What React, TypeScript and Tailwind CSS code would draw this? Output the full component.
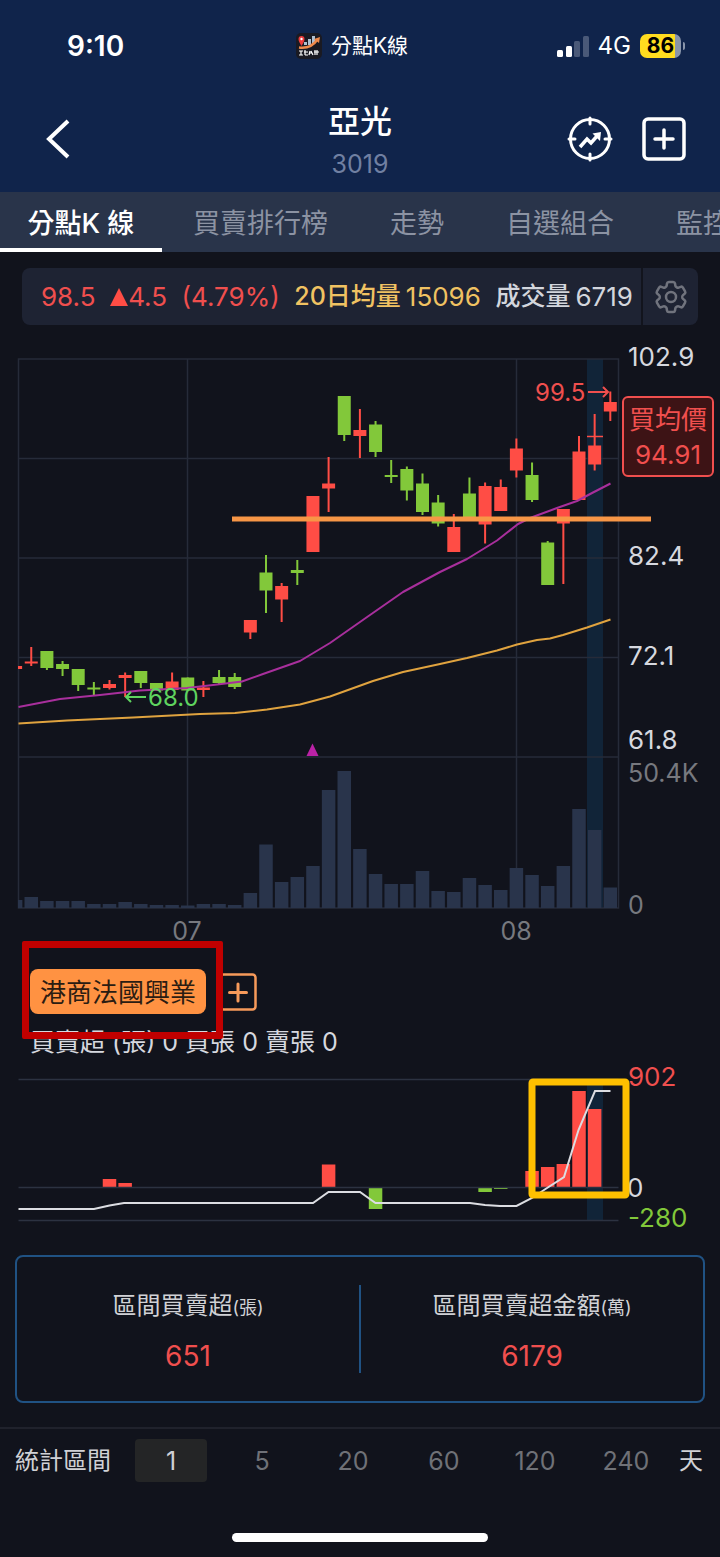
import { useState } from 'react'
import { clsx } from 'clsx'
import { HiOutlineCog6Tooth } from 'react-icons/hi2'

const tabs = ['分點K 線', '買賣排行榜', '走勢', '自選組合', '監控']
const ranges = [1, 5, 20, 60, 120, 240]

const UP = '#ff4d45'
const DOWN = '#82c83a'

// one slot per trading day, in chart units
const STEP = 15.65
const dayX = (day: number) => 15.6 + day * STEP

// [up, high, top of body, bottom of body, low]
const candles: [boolean, number, number, number, number][] = [
	[true, 666, 666, 669, 669],
	[true, 647, 661.5, 663.5, 666],
	[false, 651, 651, 668, 670],
	[false, 661, 664, 669, 676],
	[false, 669, 669, 685, 691],
	[false, 682, 687.5, 689.5, 695.5],
	[true, 680, 684, 688, 689.5],
	[true, 672.5, 675, 678, 697],
	[false, 671, 671, 683, 688],
	[false, 683, 683, 690.5, 690.5],
	[true, 672.5, 681.5, 690, 690],
	[false, 677.5, 677.5, 690.5, 690.5],
	[true, 681, 687.5, 690, 697],
	[false, 670, 677, 683, 684],
	[false, 673, 677, 687, 689],
	[true, 620, 620, 632.5, 639],
	[false, 555, 572.5, 590.5, 613],
	[true, 583, 586, 599.5, 622],
	[false, 560, 570, 573, 585],
	[true, 496, 496, 552, 552],
	[true, 457, 483.5, 488.5, 512],
	[false, 396, 396, 435, 441],
	[true, 409, 430, 436, 458],
	[false, 421, 424.5, 452, 457],
	[false, 460, 475, 477, 483],
	[false, 466.5, 469, 490.5, 500.5],
	[false, 473.5, 483.5, 512, 515],
	[false, 495, 502.5, 523.5, 526.5],
	[true, 514, 527, 552, 552],
	[false, 477.5, 493.5, 520.5, 520.5],
	[true, 482.5, 486, 524.5, 543.5],
	[true, 479.5, 487, 511, 511],
	[true, 438.5, 448.5, 470.5, 477.5],
	[false, 462.5, 475, 500, 502],
	[false, 541, 542.5, 585, 585],
	[true, 509, 509, 523.5, 584],
	[true, 436, 451.5, 500, 500],
	[true, 414, 445.5, 464.5, 470.5],
	[true, 391.5, 402, 411.5, 421],
]

const volumes = [
	8, 11, 7, 7, 7, 4, 4, 6, 4, 3, 3, 2.5, 4, 4, 3, 15, 63.5, 26, 31, 42, 118,
	137, 59, 34, 24, 24, 37, 17, 16, 30, 23, 18, 40, 33, 22, 42, 99, 78, 20.5,
]

// [day, net lots in chart units]
const netLots = [
	[6, 8],
	[7, 4],
	[20, 22.5],
	[23, -21],
	[30, -4],
	[31, -1],
	[33, 16],
	[34, 20],
	[35, 23],
	[36, 96],
	[37, 78],
]

const fastAverage =
	'18.5,707 60,699 100,695 140,690.5 187,688 213,685 242,681.5 263,674 300,661 330,643 370,615 403,592 440,572 467,559 497,540.5 518,524 530,518 557,508 577,501 593,492.5 610.5,483.5'
const slowAverage =
	'18.5,723.5 67,720.5 133,717.5 200,714 235,713 267,709.5 300,704.5 330,696.5 373,681 403,672 440,664 467,658 497,650.5 517,644.5 537,640 550,638.5 563,635 587,627.5 610.5,619.5'
const balance =
	'18.5,1209 94,1209 109.5,1205.5 124,1203 313,1203 328.5,1192 360,1192 375.5,1203 470,1203 485,1205 500,1206 516.5,1206 532,1198 547,1188 564,1177 578.5,1130 595,1091 610.5,1091'

function AppBadge() {
	return (
		<svg viewBox="0 0 26 26" className="size-[26px]" aria-hidden="true">
			<rect width="26" height="26" rx="5" fill="#1a1a22" />
			<path d="M8 12V9h3v3zM12 12V6h3v6zM16 11V3h3v8z" fill="#aebfd0" />
			<path
				d="M3 14.5c8 1 14-1.500 18-7.500"
				fill="none"
				stroke="#f08a4b"
				strokeWidth="2.500"
			/>
			<path d="m18 6 6-2-1 6z" fill="#f08a4b" />
			<path
				d="M5.500 13C3.500 9.500 2.500 8 2.500 6a3 3 0 0 1 6 0c0 2-1 3.500-3 7z"
				fill="#ee3b3b"
			/>
			<circle cx="5.500" cy="6" r="1.200" fill="#fff" />
			<path
				d="M3 18h4M5 18v4M3 22h4M9 17v5M8 19h4M9 22h3M14 18l-1 4M15 18l2 4M14 20h2M19 17v5M18 19h5M21 17v5"
				fill="none"
				stroke="#fff"
				strokeWidth="1.200"
			/>
		</svg>
	)
}

function StatusBar() {
	return (
		<div className="grid h-[92px] grid-cols-[1fr_auto_1fr] items-center pl-[19px] pr-[35px]">
			<time className="pl-12 text-[28px] font-semibold leading-8">9:10</time>
			<div className="flex items-center gap-[9px]">
				<AppBadge />
				<span className="text-[21px] leading-8">分點K線</span>
			</div>
			<div className="flex items-center justify-end gap-[9px]">
				<svg viewBox="0 0 32 21" className="h-[21px] w-8" aria-label="Signal">
					<rect x="0" y="14" width="6" height="7" rx="1.500" fill="#fff" />
					<rect x="9" y="10" width="6" height="11" rx="1.500" fill="#fff" />
					<rect x="17" y="5" width="6" height="16" rx="1.500" fill="#4a5978" />
					<rect x="26" y="0" width="6" height="21" rx="1.500" fill="#4a5978" />
				</svg>
				<span className="text-2xl leading-8">4G</span>
				<div className="flex items-center gap-[2px]">
					<span className="flex h-6 w-[41px] items-center justify-center rounded-[7px] bg-linear-to-r from-[#ffdc1f] from-85% to-[#8995aa] to-85% text-[21px] font-bold leading-6 text-black">
						86
					</span>
					<span className="h-2 w-[2px] rounded-r-full bg-[#8995aa]" />
				</div>
			</div>
		</div>
	)
}

function Header() {
	return (
		<header className="h-48 bg-[#10244b] text-white">
			<StatusBar />
			<div className="grid grid-cols-[1fr_auto_1fr] items-center px-[34px]">
				<button type="button" aria-label="返回" className="ml-[10px] w-fit">
					<svg viewBox="0 0 28 42" className="h-[42px] w-7" fill="none">
						<path d="M24 3 5 21l19 18" stroke="#fff" strokeWidth="4" />
					</svg>
				</button>
				<div className="flex flex-col items-center pb-[10px]">
					<h1 className="text-[32px] font-medium leading-[60px]">亞光</h1>
					<p className="text-[25px] leading-6 text-[#7080a2]">3019</p>
				</div>
				<div className="flex items-center justify-end gap-[29px]">
					<button type="button" aria-label="追蹤走勢">
						<svg viewBox="0 0 46 46" className="size-[46px]" fill="none">
							<g stroke="#fff" strokeWidth="3" strokeLinecap="round">
								<circle cx="23" cy="23" r="19.500" />
								<path d="M23 2v6M23 38v6M2 23h6M38 23h6" />
							</g>
							<path d="m13 31 7-8 4 4 7-8" stroke="#fff" strokeWidth="3.500" />
							<path d="M25.500 17.500 34 16l-1 9z" fill="#fff" />
						</svg>
					</button>
					<button type="button" aria-label="加入自選">
						<svg viewBox="0 0 44 44" className="size-11" fill="none">
							<g stroke="#fff" strokeWidth="3.500" strokeLinecap="round">
								<rect x="2" y="2" width="40" height="40" rx="4" />
								<path d="M22 13v18M13 22h18" />
							</g>
						</svg>
					</button>
				</div>
			</div>
		</header>
	)
}

function Tabs() {
	return (
		<nav className="flex h-[60px] overflow-hidden bg-[#29344a] text-[27px]">
			{tabs.map((label, i) => (
				<a
					key={label}
					href="#"
					className={clsx(
						'flex shrink-0 items-center justify-center whitespace-nowrap border-b-4 pt-2',
						i === 0
							? 'w-[162px] border-white font-medium text-white'
							: 'border-transparent px-[31px] text-[#8c93a3]',
					)}
				>
					{label}
				</a>
			))}
		</nav>
	)
}

function QuoteBar() {
	return (
		<div className="mx-[22px] mt-4 flex h-[57px] items-stretch rounded-lg bg-[#1e2333]">
			<div className="flex flex-1 items-center justify-between whitespace-nowrap pl-[19px] pr-2 text-[26px]">
				<span className="text-[#f04f4e]">98.5</span>
				<span className="flex items-center text-[#f04f4e]">
					<svg viewBox="0 0 18 18" className="size-[18px]" aria-hidden="true">
						<path d="M9 0 18 18H0z" fill="#ff4d45" />
					</svg>
					4.5
				</span>
				<span className="text-[#f04f4e]">(4.79%)</span>
				<span className="flex items-center gap-[5px] text-[#f0c262]">
					<span className="text-[25px] font-medium">20日均量</span>
					15096
				</span>
				<span className="flex items-center gap-[5px] text-[#d3d6dd]">
					<span className="text-[25px] font-medium">成交量</span>
					6719
				</span>
			</div>
			<button
				type="button"
				aria-label="設定"
				className="flex w-[57px] items-center justify-center border-l-2 border-[#12141d] text-[#70737d]"
			>
				<HiOutlineCog6Tooth className="size-10" />
			</button>
		</div>
	)
}

function PriceChart() {
	return (
		<div className="relative mt-[15px]">
			<svg viewBox="0 340 720 600" className="block w-full overflow-visible">
				<defs>
					<clipPath id="plot">
						<rect x="18" y="340" width="601" height="600" />
					</clipPath>
				</defs>
				<rect x="587" y="359" width="16" height="549" fill="#112438" />
				<g stroke="#262b39" strokeWidth="1.500" fill="none">
					<path d="M18.500 359H618.500V908H18.500z" />
					<path d="M18.500 458.500H618.500M18.500 558H618.500M18.500 657.500H618.500M18.500 757H618.500" />
					<path d="M187.500 359V908M516.500 359V908" />
				</g>

				<g clipPath="url(#plot)">
					{volumes.map((height, day) => (
						<rect
							key={day}
							x={dayX(day) - 6.75}
							y={908 - height}
							width="13.5"
							height={height}
							fill="#29344b"
						/>
					))}
					{candles.map(([up, high, top, bottom, low], day) => (
						<g key={day} fill={up ? UP : DOWN}>
							<rect x={dayX(day) - 1} y={high} width="2" height={low - high} />
							<rect
								x={dayX(day) - 6.5}
								y={top}
								width="13"
								height={bottom - top}
							/>
						</g>
					))}
				</g>
				<path d="M587 436.500h16" stroke={UP} strokeWidth="1.500" />

				<g fill="none" strokeWidth="2" strokeLinejoin="round">
					<polyline points={fastAverage} stroke="#a82f9c" />
					<polyline points={slowAverage} stroke="#e0a33f" />
				</g>
				<path d="M312.500 743.500 318.500 756h-12z" fill="#bb22a6" />
				<path d="M232 519H651" stroke="#f79646" strokeWidth="5" />

				<g fontSize="24">
					<text x="535" y="401" fill="#f04f4e">
						99.5
					</text>
					<text x="148" y="706" fill="#5fd45f">
						68.0
					</text>
				</g>
				<g fill="none" strokeWidth="2">
					<path d="M588 392h20M603 387l5 5-5 5" stroke="#f04f4e" />
					<path d="M146 697h-20M131 692l-5 5 5 5" stroke="#5fd45f" />
				</g>

				<g fontSize="26" fill="#d6d8df">
					<text x="628" y="366">102.9</text>
					<text x="628" y="565">82.4</text>
					<text x="628" y="665">72.1</text>
					<text x="628" y="749">61.8</text>
				</g>
				<g fontSize="25" fill="#77797f">
					<text x="628" y="782">50.4K</text>
					<text x="628" y="914">0</text>
					<text x="187" y="940" textAnchor="middle">
						07
					</text>
					<text x="516" y="940" textAnchor="middle">
						08
					</text>
				</g>
			</svg>
			<div className="absolute right-[6px] top-14 flex h-[81px] w-[92px] flex-col items-center justify-center rounded-md border-2 border-[#f04f4e] bg-[#3d1315] text-[26px] leading-[35px] text-[#f04f4e]">
				<span>買均價</span>
				<span>94.91</span>
			</div>
		</div>
	)
}

function Broker() {
	return (
		<section className="relative px-[30px] pt-[29px]">
			<div className="flex items-center gap-[13px]">
				<button
					type="button"
					className="h-[45px] rounded-lg bg-[#ff9242] px-[10px] pt-[2px] text-[26px] text-[#2b1c12]"
				>
					港商法國興業
				</button>
				<button type="button" aria-label="新增分點">
					<svg viewBox="0 0 38 38" className="size-[38px]" fill="none">
						<g stroke="#f79a5a" strokeWidth="2.500" strokeLinecap="round">
							<rect x="1.500" y="1.500" width="35" height="35" rx="3" />
							<path
								d="M19 11v17M10.500 19.500h17"
								strokeWidth="3"
							/>
						</g>
					</svg>
				</button>
			</div>
			<p className="mt-3 text-[25px] leading-8 text-[#d6d8df]">
				買賣超 (張) 0 買張 0 賣張 0
			</p>
			<div className="absolute left-[22px] top-px h-[98px] w-[201px] rounded-xs border-7 border-[#c00000]" />
		</section>
	)
}

function NetLotsChart() {
	return (
		<svg viewBox="0 1058 720 177" className="block w-full">
			<rect x="587" y="1080" width="16" height="140" fill="#112438" />
			{netLots.map(([day, lots]) => (
				<rect
					key={day}
					x={dayX(day) - 6.75}
					y={lots > 0 ? 1187 - lots : 1188}
					width="13.5"
					height={Math.abs(lots)}
					fill={lots > 0 ? UP : DOWN}
				/>
			))}
			<path
				d="M18.500 1079.500H618.500M18.500 1187.500H618.500M18.500 1220.500H618.500"
				stroke="#2c3241"
				strokeWidth="1.500"
			/>
			<polyline
				points={balance}
				fill="none"
				stroke="#dcdde2"
				strokeWidth="2"
			/>
			<g fontSize="26">
				<text x="628" y="1086" fill="#f04f4e">
					902
				</text>
				<text x="627" y="1197" fill="#d6d8df">
					0
				</text>
				<text x="628" y="1227" fill={DOWN}>
					-280
				</text>
			</g>
			<rect
				x="532"
				y="1082"
				width="94"
				height="113"
				rx="1"
				fill="none"
				stroke="#ffc000"
				strokeWidth="7"
			/>
		</svg>
	)
}

function Stat({
	label,
	unit,
	value,
}: {
	label: string
	unit: string
	value: number
}) {
	return (
		<div className="flex flex-1 flex-col items-center justify-center gap-2 pt-1">
			<dt className="text-[24px] leading-10 text-[#d0d1d5]">
				{label}
				<span className="text-[18px]">({unit})</span>
			</dt>
			<dd className="text-[28px] leading-10 text-[#f04f4e]">{value}</dd>
		</div>
	)
}

function Totals() {
	return (
		<dl className="mx-[15px] mt-5 flex h-[148px] items-stretch rounded-lg border-2 border-[#205283] py-7">
			<Stat label="區間買賣超" unit="張" value={651} />
			<div className="w-[2px] bg-[#205283]" />
			<Stat label="區間買賣超金額" unit="萬" value={6179} />
		</dl>
	)
}

function RangePicker() {
	const [range, setRange] = useState(1)

	return (
		<footer className="mt-6 border-t-2 border-[#20222c] pb-[15px] pt-[10px]">
			<div className="flex items-center pl-[15px] pr-[17px] text-[24px] text-[#d0d1d5]">
				<span>統計區間</span>
				<div className="ml-6 flex gap-[19px]">
					{ranges.map((days) => (
						<button
							key={days}
							type="button"
							aria-pressed={days === range}
							onClick={() => setRange(days)}
							className={clsx(
								'h-[43px] w-[72px] rounded-sm pt-[2px] text-[25px]',
								days === range
									? 'bg-[#242526] text-[#d0d1d5]'
									: 'text-[#6f7177]',
							)}
						>
							{days}
						</button>
					))}
				</div>
				<span className="ml-auto">天</span>
			</div>
			<div className="mx-auto mt-[51px] h-[9px] w-64 rounded-full bg-white" />
		</footer>
	)
}

export default function App() {
	return (
		<main
			lang="zh-Hant"
			className="min-h-screen w-full overflow-hidden bg-[#11131c] font-['Inter','Noto_Sans_CJK_TC',sans-serif]"
		>
			<Header />
			<Tabs />
			<QuoteBar />
			<PriceChart />
			<Broker />
			<NetLotsChart />
			<Totals />
			<RangePicker />
		</main>
	)
}
